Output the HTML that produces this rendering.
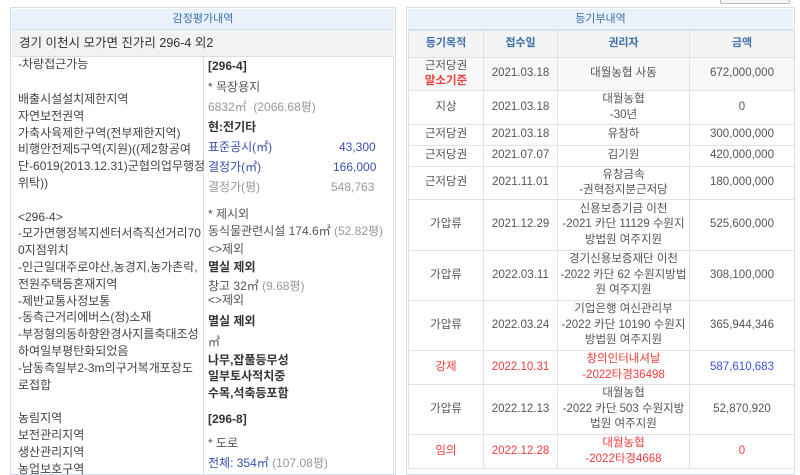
<!DOCTYPE html>
<html><head><meta charset="utf-8"><style>
*{margin:0;padding:0;box-sizing:border-box}
html,body{width:800px;height:475px;overflow:hidden}
body{background:#fff;font-family:"Liberation Sans","Noto Sans CJK KR",sans-serif;font-size:12px;color:#555;position:relative}
.panel{position:absolute;top:7px;border:1px solid #d5dde6;background:#fff;overflow:hidden}
.hd{position:absolute;left:1px;right:1px;top:1px;height:21px;background:#e9f2fb;border-bottom:1px solid #d8e0e8;color:#3d6fa8;font-size:11px;text-align:center;line-height:21px}
.t{position:absolute;white-space:nowrap;line-height:14px}
.b{font-weight:bold;color:#333}
.bl{color:#3b4fb0}
.g{color:#999}
table{position:absolute;left:1px;top:22px;border-collapse:collapse;table-layout:fixed}
td{border:1px solid #dfe3e8;text-align:center;line-height:15.5px;color:#555;padding:0;white-space:nowrap;overflow:hidden;font-size:11.5px}
tr.h td{background:#f4f4f4;color:#3d6fa8;font-size:11px;font-weight:bold;height:27px}
.r{color:#f03c3c}
</style></head><body>
<div style="position:absolute;left:720px;top:-4px;width:70px;height:8px;border:1px solid #bbb;border-radius:2px;background:#f4f4f4"></div>
<div class="panel" style="left:10px;width:386px;height:468px">
<div class="hd">감정평가내역</div>
<div style="position:absolute;left:1px;right:1px;top:22px;height:27px;background:#f2f2f2;border-bottom:1px solid #ddd;font-size:12.5px;color:#333;line-height:27px;padding-left:7px">경기 이천시 모가면 진가리 296-4 외2</div>
<div style="position:absolute;left:192px;top:49px;bottom:0;border-left:1px solid #ddd"></div>
<div style="position:absolute;left:382px;top:49px;bottom:0;border-left:1px solid #e6e6e6"></div>
</div>
<div class="t" style="left:18px;top:57px;color:#444">-차량접근가능</div>
<div class="t" style="left:18px;top:91px;line-height:16.8px;color:#444">배출시설설치제한지역<br>자연보전권역<br>가축사육제한구역(전부제한지역)<br>비행안전제5구역(지원)((제2항공여<br>단-6019(2013.12.31)군협의업무행정<br>위탁))<br><br>&lt;296-4&gt;<br>-모가면행정복지센터서측직선거리70<br>0지점위치<br>-인근일대주로야산,농경지,농가촌락,<br>전원주택등혼재지역<br>-제반교통사정보통<br>-동측근거리에버스(정)소재<br>-부정형의동하향완경사지를축대조성<br>하여일부평탄화되었음<br>-남동측일부2-3m의구거복개포장도<br>로접합<br><br>농림지역<br>보전관리지역<br>생산관리지역<br>농업보호구역</div>
<div class="t b" style="left:208px;top:59px">[296-4]</div>
<div class="t" style="left:208px;top:80px">* 목장용지</div>
<div class="t g" style="left:208px;top:100px">6832㎡ &nbsp;(2066.68평)</div>
<div class="t b" style="left:208px;top:120px">현:전기타</div>
<div class="t bl" style="left:208px;top:140px">표준공시(㎡)</div><div class="t bl" style="left:339px;top:140px">43,300</div>
<div class="t bl" style="left:208px;top:160px">결정가(㎡)</div><div class="t bl" style="left:333px;top:160px">166,000</div>
<div class="t g" style="left:208px;top:180px">결정가(평)</div><div class="t g" style="left:331px;top:180px">548,763</div>
<div class="t" style="left:208px;top:207px">* 제시외</div>
<div class="t" style="left:208px;top:224px">동식물관련시설 174.6㎡ <span class="g">(52.82평)</span></div>
<div class="t" style="left:208px;top:242px">&lt;&gt;제외</div>
<div class="t b" style="left:208px;top:260px">멸실 제외</div>
<div class="t" style="left:208px;top:279px">창고 32㎡ <span class="g">(9.68평)</span></div>
<div class="t" style="left:208px;top:293px">&lt;&gt;제외</div>
<div class="t b" style="left:208px;top:314px">멸실 제외</div>
<div class="t" style="left:208px;top:335px">㎡</div>
<div class="t b" style="left:208px;top:353px">나무,잡풀등무성</div>
<div class="t b" style="left:208px;top:369px">일부토사적치중</div>
<div class="t b" style="left:208px;top:386px">수목,석축등포함</div>
<div class="t b" style="left:208px;top:412px">[296-8]</div>
<div class="t" style="left:208px;top:436px">* 도로</div>
<div class="t" style="left:208px;top:456px"><span class="bl">전체: 354㎡</span> <span class="g">(107.08평)</span></div>

<div class="panel" style="left:406px;width:389px;height:468px">
<div class="hd">등기부내역</div>
<table style="width:386px">
<colgroup><col style="width:75px"><col style="width:74px"><col style="width:132px"><col style="width:105px"></colgroup>
<tr class="h"><td>등기목적</td><td>접수일</td><td>권리자</td><td>금액</td></tr>
<tr style="height:33px;background:#f8f8f8"><td>근저당권<br><b class="r">말소기준</b></td><td>2021.03.18</td><td>대월농협 사동</td><td>672,000,000</td></tr>
<tr style="height:34px"><td>지상</td><td>2021.03.18</td><td>대월농협<br>-30년</td><td>0</td></tr>
<tr style="height:21px"><td>근저당권</td><td>2021.03.18</td><td>유창하</td><td>300,000,000</td></tr>
<tr style="height:21px"><td>근저당권</td><td>2021.07.07</td><td>김기원</td><td>420,000,000</td></tr>
<tr style="height:33px"><td>근저당권</td><td>2021.11.01</td><td>유창금속<br>-권혁정지분근저당</td><td>180,000,000</td></tr>
<tr style="height:51px"><td>가압류</td><td>2021.12.29</td><td>신용보증기금 이천<br>-2021 카단 11129 수원지<br>방법원 여주지원</td><td>525,600,000</td></tr>
<tr style="height:50px"><td>가압류</td><td>2022.03.11</td><td>경기신용보증재단 이천<br>-2022 카단 62 수원지방법<br>원 여주지원</td><td>308,100,000</td></tr>
<tr style="height:50px"><td>가압류</td><td>2022.03.24</td><td>기업은행 여신관리부<br>-2022 카단 10190 수원지<br>방법원 여주지원</td><td>365,944,346</td></tr>
<tr style="height:34px"><td class="r">강제</td><td class="r">2022.10.31</td><td class="r">창의인터내셔날<br>-2022타경36498</td><td style="color:#3b4fe0">587,610,683</td></tr>
<tr style="height:50px"><td>가압류</td><td>2022.12.13</td><td>대월농협<br>-2022 카단 503 수원지방<br>법원 여주지원</td><td>52,870,920</td></tr>
<tr style="height:34px"><td class="r">임의</td><td class="r">2022.12.28</td><td class="r">대월농협<br>-2022타경4668</td><td class="r">0</td></tr>
</table>
</div>
</body></html>
